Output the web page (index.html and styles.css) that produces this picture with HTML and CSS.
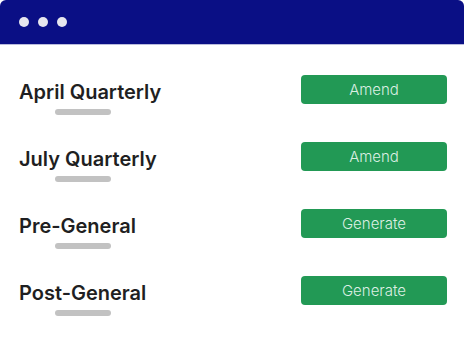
FILE: index.html
```html
<!DOCTYPE html>
<html lang="en">
<head>
    <meta charset="UTF-8">
    <meta name="viewport" content="width=device-width, initial-scale=1.0">
    <title>Returns</title>
    <link rel="stylesheet" href="styles.css">
</head>
<body>

    <div class="window">
        <div class="titlebar">
            <span class="dot"></span>
            <span class="dot"></span>
            <span class="dot"></span>
        </div>
        <div class="content">
            <div class="row">
                <div class="label">
                    <div class="title">April Quarterly</div>
                    <div class="bar"></div>
                </div>
                <button class="action">Amend</button>
            </div>
            <div class="row">
                <div class="label">
                    <div class="title">July Quarterly</div>
                    <div class="bar"></div>
                </div>
                <button class="action">Amend</button>
            </div>
            <div class="row">
                <div class="label">
                    <div class="title">Pre-General</div>
                    <div class="bar"></div>
                </div>
                <button class="action">Generate</button>
            </div>
            <div class="row">
                <div class="label">
                    <div class="title">Post-General</div>
                    <div class="bar"></div>
                </div>
                <button class="action">Generate</button>
            </div>
        </div>
    </div>

</body>
</html>
```

FILE: styles.css
```css
body {
    margin: 0;
    background-color: #ffffff;
    font-family: Inter, "Noto Sans", sans-serif;
}

.window {
    width: 464px;
    height: 350px;
    border-radius: 6px;
    overflow: hidden;
    background-color: #ffffff;
}

.titlebar {
    height: 45px;
    background-color: #0a0f85;
    border-bottom: 1px solid #b9bbdc;
    display: flex;
    align-items: center;
    gap: 9px;
    padding-left: 19px;
    box-sizing: border-box;
}

.dot {
    width: 10px;
    height: 10px;
    border-radius: 50%;
    background-color: #e6e6ee;
}

.content {
    padding: 30px 17px 0 19px;
}

.row {
    display: flex;
    justify-content: space-between;
    align-items: flex-start;
    height: 67px;
}

.label {
    padding-top: 5px;
}

.title {
    font-size: 20px;
    line-height: 24px;
    font-weight: 600;
    color: #1f1f22;
}

.bar {
    width: 56px;
    height: 6px;
    margin: 5px 0 0 36px;
    border-radius: 3px;
    background-color: #c2c2c2;
}

.action {
    width: 146px;
    height: 29px;
    border: none;
    border-radius: 4px;
    background-color: #229955;
    color: #dcefe3;
    font-family: Inter, "Noto Sans", sans-serif;
    font-size: 15px;
    font-weight: 300;
    cursor: pointer;
}
```
